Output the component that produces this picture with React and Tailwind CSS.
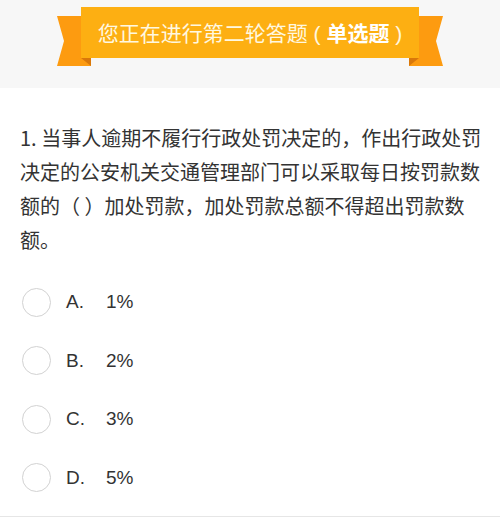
import React from 'react';

const options = [
  { key: 'A.', text: '1%' },
  { key: 'B.', text: '2%' },
  { key: 'C.', text: '3%' },
  { key: 'D.', text: '5%' },
];

function Ribbon() {
  return (
    <div className="relative w-[386px] h-[59px]">
      {/* tails */}
      <svg className="absolute inset-0" width="386" height="59" viewBox="0 0 386 59">
        <polygon points="0,9 34,9 34,59 0,59 7,34" fill="#fd9b10" />
        <polygon points="24,51 34,51 34,59" fill="#d9780a" />
        <polygon points="352,9 386,9 379,34 386,59 352,59" fill="#fd9b10" />
        <polygon points="352,51 362,51 352,59" fill="#d9780a" />
      </svg>
      <div className="absolute left-[24px] top-0 w-[338px] h-[51px] bg-[#fdaf12] flex items-center justify-center pt-[2px] text-[21px] text-[#fff8e0] whitespace-pre">
        <span>您正在进行第二轮答题 ( <b className="font-bold text-white">单选题</b> )</span>
      </div>
    </div>
  );
}

export default function App() {
  return (
    <div className="w-[500px] h-[522px] bg-white overflow-hidden" style={{ fontFamily: '"Liberation Sans", "Noto Sans CJK SC", sans-serif' }}>
      <div className="h-[88px] bg-[#f7f7f7] flex justify-center pt-[7px]">
        <Ribbon />
      </div>

      <p className="pt-[33px] pl-[20px] pr-[16px] text-[20px] leading-[34px] text-[#333333] [text-spacing-trim:space-all]" style={{ fontFamily: '"Noto Sans CJK SC", sans-serif' }}>
        1. 当事人逾期不履行行政处罚决定的，作出行政处罚决定的公安机关交通管理部门可以采取每日按罚款数额的（ ）加处罚款，加处罚款总额不得超出罚款数额。
      </p>

      <div className="mt-[16px] pb-[9px] border-b border-[#e6e6e6]">
        {options.map((o) => (
          <div key={o.key} className="h-[58.5px] flex items-center pl-[22px]">
            <div className="w-[29px] h-[29px] rounded-full border-[1.5px] border-[#d2d2d2]" />
            <span className="ml-[15px] w-[40px] text-[19px] text-[#333333]">{o.key}</span>
            <span className="text-[19px] text-[#333333]">{o.text}</span>
          </div>
        ))}
      </div>
    </div>
  );
}
